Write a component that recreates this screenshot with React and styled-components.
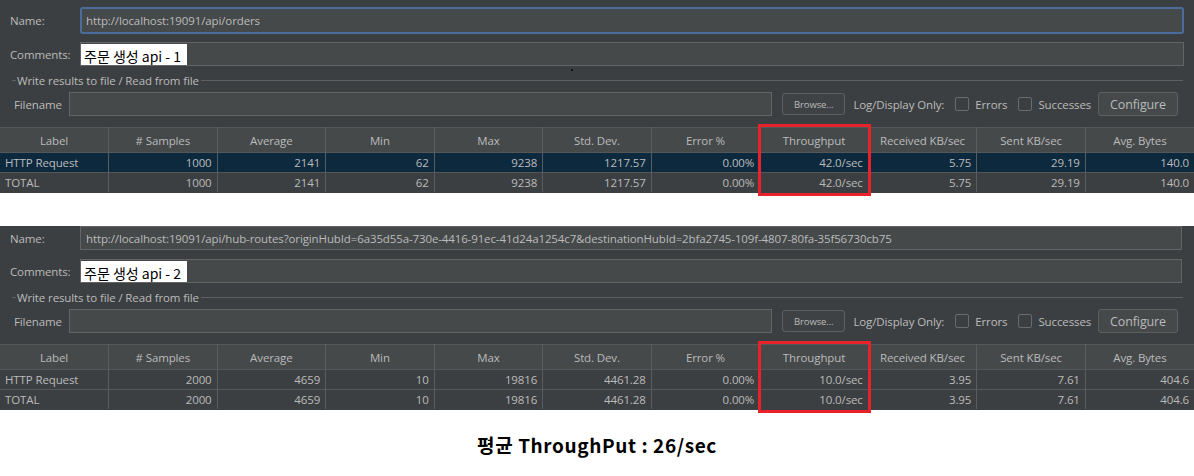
import React from 'react';
import styled, { createGlobalStyle } from 'styled-components';

const GlobalStyle = createGlobalStyle`
  html, body {
    margin: 0;
    padding: 0;
    background: #ffffff;
  }
  body {
    font-family: "Open Sans", "Noto Sans CJK KR", sans-serif;
  }
`;

const Page = styled.div`
  width: 1194px;
  height: 476px;
  overflow: hidden;
  background: #ffffff;
  display: flex;
  flex-direction: column;
`;

const Panel = styled.div`
  position: relative;
  background: #3c3f41;
  color: #bbbbbb;
  font-size: 11.5px;
  letter-spacing: -0.12px;
  padding-top: ${p => p.$top}px;
  padding-bottom: 1px;
  margin-bottom: ${p => p.$gap}px;
  display: flex;
  flex-direction: column;
`;

const FieldRow = styled.div`
  display: flex;
  align-items: center;
  padding-left: 10px;
  padding-right: ${p => p.$right}px;
  margin-bottom: ${p => p.$mb}px;
`;

const FieldLabel = styled.div`
  width: 70px;
  flex: none;
`;

const TextField = styled.div`
  flex: 1;
  height: ${p => (p.$focus ? 27 : 24)}px;
  box-sizing: border-box;
  background: #45494a;
  border: ${p => (p.$focus ? '2px solid #4a6e9c' : '1px solid #646464')};
  border-radius: ${p => (p.$focus ? 3 : 0)}px;
  display: flex;
  align-items: center;
  padding-left: ${p => (p.$focus ? 4 : 5)}px;
  white-space: nowrap;
  overflow: hidden;
  color: #bbbbbb;
`;

const Comment = styled.span`
  background: #ffffff;
  color: #000000;
  font-family: "Noto Sans CJK KR", sans-serif;
  font-size: 14px;
  letter-spacing: 0;
  height: 24px;
  line-height: 24px;
  padding: 0 6px 0 3px;
  margin-left: -5px;
  margin-top: 1px;
  align-self: flex-start;
`;

const Dot = styled.div`
  position: absolute;
  left: 571px;
  top: 69px;
  width: 2px;
  height: 2px;
  background: #111;
`;

const GroupTitle = styled.div`
  display: flex;
  align-items: center;
  padding: 0 11px 0 12px;
  height: 16px;
  margin-bottom: 4px;
`;

const GroupLine = styled.div`
  height: 1px;
  background: #5e6062;
  flex: ${p => (p.$grow ? 1 : 'none')};
  width: ${p => (p.$grow ? 'auto' : '4px')};
`;

const GroupText = styled.span`
  padding: 0 2px 0 1px;
`;

const FileRow = styled.div`
  display: flex;
  align-items: center;
  height: 24px;
  padding: 0 16px 0 14px;
  margin-bottom: 11px;
`;

const FileLabel = styled.span`
  width: 55px;
  flex: none;
`;

const FileInput = styled.div`
  flex: 1;
  height: 24px;
  box-sizing: border-box;
  border: 1px solid #646464;
  background: #45494a;
`;

const Button = styled.div`
  height: ${p => p.$h}px;
  box-sizing: border-box;
  padding: 0 ${p => p.$px}px;
  border: 1px solid #5e6060;
  border-radius: 3px;
  background: ${p => p.$bg};
  font-size: ${p => p.$fs}px;
  display: flex;
  align-items: center;
  margin-left: ${p => p.$ml}px;
`;

const Caption = styled.span`
  margin-left: ${p => p.$ml}px;
`;

const Check = styled.span`
  width: 14px;
  height: 14px;
  box-sizing: border-box;
  border: 1px solid #6b6b6b;
  border-radius: 2px;
  margin-left: ${p => p.$ml}px;
  margin-right: 6px;
  display: inline-block;
`;

const TableWrap = styled.div`
  position: relative;
`;

const Table = styled.table`
  width: 1194px;
  table-layout: fixed;
  border-collapse: collapse;
  font-size: 11.5px;
`;

const HeadCell = styled.th`
  height: 24px;
  background: #45494a;
  font-weight: normal;
  text-align: center;
  border-top: 1px solid #555859;
  border-right: 1px solid #5a5d5f;
  padding: 0;
  color: #bbbbbb;
  &:last-child { border-right: none; }
`;

const Row = styled.tr`
  background: ${p => (p.$selected ? '#0d293e' : '#3c3f41')};
`;

const Cell = styled.td`
  height: 19px;
  padding: 0 5px;
  border-right: 1px solid #5a5d5f;
  border-top: 1px solid #555859;
  text-align: ${p => (p.$left ? 'left' : 'right')};
  white-space: nowrap;
  overflow: hidden;
  color: #bbbbbb;
  &:last-child { border-right: none; }
`;

const Highlight = styled.div`
  position: absolute;
  left: 758px;
  top: -3px;
  width: 113px;
  bottom: -4px;
  box-sizing: border-box;
  border: 3px solid #e8212b;
  pointer-events: none;
`;

const Summary = styled.div`
  text-align: center;
  font-family: "Noto Sans CJK KR", sans-serif;
  font-weight: 700;
  font-size: 19px;
  letter-spacing: 0.6px;
  line-height: 26px;
  color: #000;
  margin-top: 22px;
`;

const headers = [
  'Label', '# Samples', 'Average', 'Min', 'Max', 'Std. Dev.', 'Error %',
  'Throughput', 'Received KB/sec', 'Sent KB/sec', 'Avg. Bytes',
];

const results = [
  {
    top: 7,
    gap: 33,
    right: 10,
    focus: true,
    name: 'http://localhost:19091/api/orders',
    comment: '주문 생성 api - 1',
    rows: [
      ['HTTP Request', '1000', '2141', '62', '9238', '1217.57', '0.00%', '42.0/sec', '5.75', '29.19', '140.0'],
      ['TOTAL', '1000', '2141', '62', '9238', '1217.57', '0.00%', '42.0/sec', '5.75', '29.19', '140.0'],
    ],
    selected: 0,
  },
  {
    top: 0,
    gap: 0,
    right: 12,
    focus: false,
    name: 'http://localhost:19091/api/hub-routes?originHubId=6a35d55a-730e-4416-91ec-41d24a1254c7&destinationHubId=2bfa2745-109f-4807-80fa-35f56730cb75',
    comment: '주문 생성 api - 2',
    rows: [
      ['HTTP Request', '2000', '4659', '10', '19816', '4461.28', '0.00%', '10.0/sec', '3.95', '7.61', '404.6'],
      ['TOTAL', '2000', '4659', '10', '19816', '4461.28', '0.00%', '10.0/sec', '3.95', '7.61', '404.6'],
    ],
    selected: -1,
  },
];

const ResultPanel = ({ data, dot }) => (
  <Panel $top={data.top} $gap={data.gap}>
    {dot && <Dot />}
    <FieldRow $right={data.right} $mb={data.focus ? 8 : 9}>
      <FieldLabel>Name:</FieldLabel>
      <TextField $focus={data.focus}>{data.name}</TextField>
    </FieldRow>
    <FieldRow $right={data.right} $mb={6}>
      <FieldLabel>Comments:</FieldLabel>
      <TextField>
        <Comment>{data.comment}</Comment>
      </TextField>
    </FieldRow>
    <GroupTitle>
      <GroupLine />
      <GroupText>Write results to file / Read from file</GroupText>
      <GroupLine $grow />
    </GroupTitle>
    <FileRow>
      <FileLabel>Filename</FileLabel>
      <FileInput />
      <Button $h={22} $px={11} $fs={9.5} $ml={10} $bg="#3f4244">Browse...</Button>
      <Caption $ml={8}>Log/Display Only:</Caption>
      <Check $ml={11} />
      <span>Errors</span>
      <Check $ml={11} />
      <span>Successes</span>
      <Button $h={24} $px={11} $fs={12.5} $ml={7} $bg="#45494a">Configure</Button>
    </FileRow>
    <TableWrap>
      <Table>
        <thead>
          <tr>
            {headers.map(h => <HeadCell key={h}>{h}</HeadCell>)}
          </tr>
        </thead>
        <tbody>
          {data.rows.map((r, i) => (
            <Row key={i} $selected={i === data.selected}>
              {r.map((v, j) => <Cell key={j} $left={j === 0}>{v}</Cell>)}
            </Row>
          ))}
        </tbody>
      </Table>
      <Highlight />
    </TableWrap>
  </Panel>
);

export default function App() {
  return (
    <>
      <GlobalStyle />
      <Page>
        <ResultPanel data={results[0]} dot />
        <ResultPanel data={results[1]} />
        <Summary>평균 ThroughPut : 26/sec</Summary>
      </Page>
    </>
  );
}
